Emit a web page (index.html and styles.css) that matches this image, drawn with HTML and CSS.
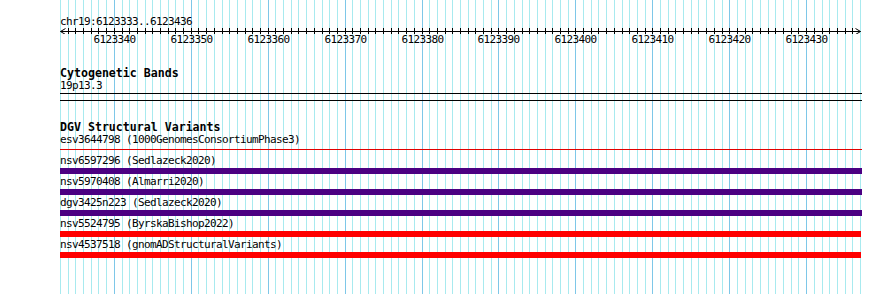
FILE: index.html
```html
<!DOCTYPE html>
<html lang="en">
<head>
    <meta charset="UTF-8">
    <title>chr19:6123333..6123436</title>
    <link rel="stylesheet" href="styles.css">
</head>
<body>

    <div class="browser">
        <svg class="grid" id="grid" width="890" height="294"></svg>

        <div class="ruler">
            <div class="ruler-title">chr19:6123333..6123436</div>
            <svg class="axis" id="axis" width="802" height="6"></svg>
            <div class="tick-labels" id="tickLabels"></div>
        </div>

        <div class="track cytobands">
            <div class="track-title">Cytogenetic Bands</div>
            <div class="feature-label">19p13.3</div>
            <div class="track-rule"></div>
            <div class="track-rule second"></div>
        </div>

        <div class="track dgv">
            <div class="track-title">DGV Structural Variants</div>

            <div class="feature">
                <div class="feature-label">esv3644798 (1000GenomesConsortiumPhase3)</div>
                <div class="feature-bar thin"></div>
            </div>
            <div class="feature">
                <div class="feature-label">nsv6597296 (Sedlazeck2020)</div>
                <div class="feature-bar loss"></div>
            </div>
            <div class="feature">
                <div class="feature-label">nsv5970408 (Almarri2020)</div>
                <div class="feature-bar loss"></div>
            </div>
            <div class="feature">
                <div class="feature-label">dgv3425n223 (Sedlazeck2020)</div>
                <div class="feature-bar loss"></div>
            </div>
            <div class="feature">
                <div class="feature-label">nsv5524795 (ByrskaBishop2022)</div>
                <div class="feature-bar gain"></div>
            </div>
            <div class="feature">
                <div class="feature-label">nsv4537518 (gnomADStructuralVariants)</div>
                <div class="feature-bar gain"></div>
            </div>
        </div>
    </div>

    <script>
        var start = 6123333;
        var end = 6123436;
        var offset = 60;
        var scale = 800 / (end - start + 1);
        var svgNS = "http://www.w3.org/2000/svg";

        function px(i) {
            return Math.floor(0.5 + i * scale) + 0.5;
        }

        function line(svg, x1, y1, x2, y2, cls) {
            var l = document.createElementNS(svgNS, "line");
            l.setAttribute("x1", x1);
            l.setAttribute("y1", y1);
            l.setAttribute("x2", x2);
            l.setAttribute("y2", y2);
            l.setAttribute("class", cls);
            svg.appendChild(l);
        }

        // background grid, one line per base
        var grid = document.getElementById("grid");
        for (var i = 0; i <= end - start + 1; i++) {
            var x = offset + px(i);
            var major = (start + i) % 10 === 0;
            line(grid, x, 0, x, 294, major ? "grid-major" : "grid-minor");
        }

        // ruler axis with arrows and ticks
        var axis = document.getElementById("axis");
        var last = px(end - start + 1);
        line(axis, 0.5, 3.5, last, 3.5, "axis-line");
        line(axis, 0.5, 3.5, 5.5, 0.5, "axis-line");
        line(axis, 0.5, 3.5, 5.5, 6.5, "axis-line");
        line(axis, last, 3.5, last - 5, 0.5, "axis-line");
        line(axis, last, 3.5, last - 5, 6.5, "axis-line");
        for (var t = 1; t <= end - start; t++) {
            line(axis, px(t), 0, px(t), 6, "axis-line");
        }

        var labels = document.getElementById("tickLabels");
        for (var k = 0; k <= end - start; k++) {
            if ((start + k) % 10 !== 0) continue;
            var span = document.createElement("span");
            span.className = "tick-label";
            span.textContent = start + k;
            span.style.left = px(k) + "px";
            labels.appendChild(span);
        }
    </script>
</body>
</html>
```

FILE: styles.css
```css
body {
    margin: 0;
    background-color: #fff;
    color: #000;
    font-family: "DejaVu Sans Mono", "Liberation Mono", monospace;
    font-size: 11px;
    letter-spacing: -0.62px;
}

.browser {
    position: relative;
    z-index: 0;
    width: 890px;
    height: 294px;
    overflow: hidden;
    padding-left: 60px;
    box-sizing: border-box;
}

.grid {
    position: absolute;
    left: 0;
    top: 0;
    z-index: -1;
}

.grid-minor {
    stroke: #a8eaef;
    stroke-width: 1;
}

.grid-major {
    stroke: #7ec7e8;
    stroke-width: 1;
}

.ruler-title {
    padding-top: 16px;
    height: 12px;
    line-height: 12px;
}

.axis {
    display: block;
}

.axis-line {
    stroke: #000;
    stroke-width: 1;
}

.tick-labels {
    position: relative;
    height: 12px;
    line-height: 12px;
}

.tick-label {
    position: absolute;
    top: 0;
    transform: translateX(-50%);
}

.track-title {
    font-size: 11.6px;
    font-weight: bold;
    letter-spacing: 0;
    height: 14px;
    line-height: 14px;
}

.feature-label {
    height: 12px;
    line-height: 12px;
    white-space: nowrap;
}

.cytobands {
    margin-top: 20px;
}

.track-rule {
    width: 802px;
    height: 1px;
    margin-top: 1px;
    background-color: #000;
}

.track-rule.second {
    margin-top: 6px;
}

.dgv {
    margin-top: 19px;
}

.feature-bar {
    width: 802px;
    height: 6px;
    margin: 1px 0 2px;
}

.feature-bar.thin {
    height: 1px;
    margin: 3px 0 5px;
    background-color: #e00000;
}

.feature-bar.loss {
    background-color: #4b0082;
}

.feature-bar.gain {
    width: 801px;
    background-color: #ff0000;
}
```
